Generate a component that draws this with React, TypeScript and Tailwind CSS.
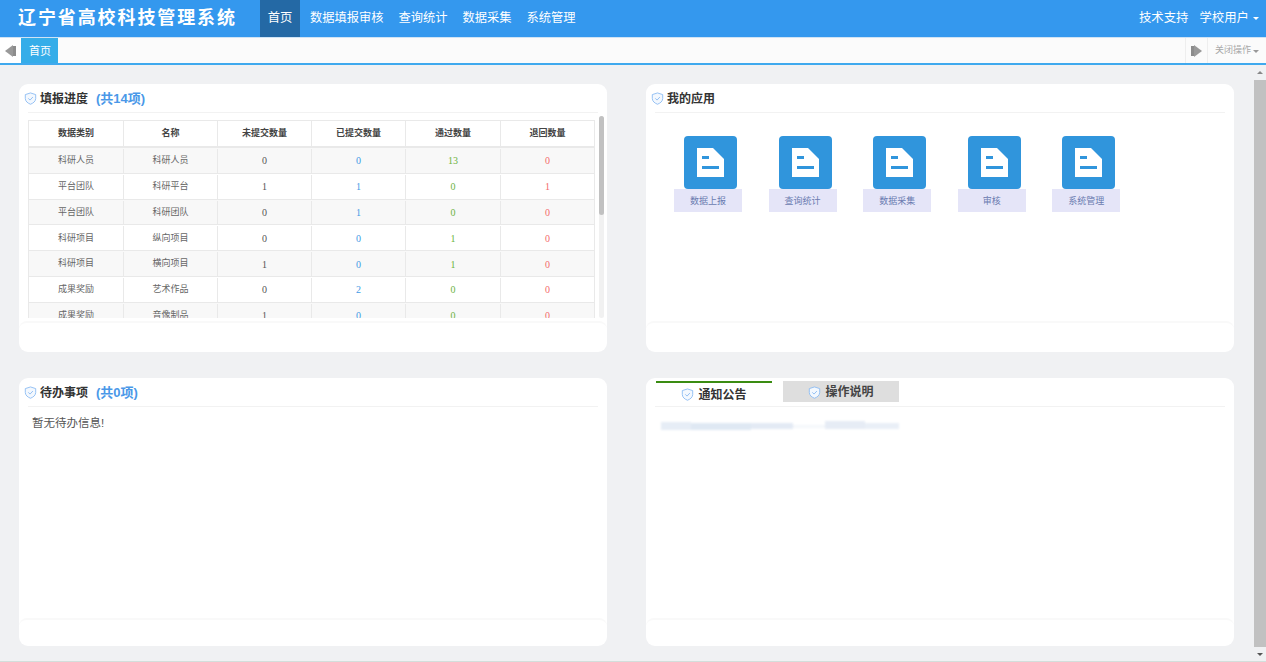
const sans = "font-['Liberation_Sans','Noto_Sans_CJK_SC',sans-serif]";

const Shield = ({ className = "" }: { className?: string }) => (
  <svg viewBox="0 0 14 14" width="13" height="13" fill="#f3f8fe" stroke="#8fbdf3" strokeWidth="1" className={className}>
    <path d="M7 1 L12.6 2.8 V7 C12.6 10 10 12 7 13.2 C4 12 1.4 10 1.4 7 V2.8 Z" />
    <path d="M4.6 6.8 L6.5 8.7 L9.6 5.4" fill="none" />
  </svg>
);

const rows = [
  ["科研人员", "科研人员", "0", "0", "13", "0"],
  ["平台团队", "科研平台", "1", "1", "0", "1"],
  ["平台团队", "科研团队", "0", "1", "0", "0"],
  ["科研项目", "纵向项目", "0", "0", "1", "0"],
  ["科研项目", "横向项目", "1", "0", "1", "0"],
  ["成果奖励", "艺术作品", "0", "2", "0", "0"],
  ["成果奖励", "音像制品", "1", "0", "0", "0"],
];
const heads = ["数据类别", "名称", "未提交数量", "已提交数量", "通过数量", "退回数量"];
const numColor = [
  "",
  "",
  "text-[#555] font-['Liberation_Serif',serif] text-[10px]",
  "text-[#3f9ae5] font-['Liberation_Serif',serif] text-[10px]",
  "text-[#6cb33f] font-['Liberation_Serif',serif] text-[10px]",
  "text-[#f46a6a] font-['Liberation_Serif',serif] text-[10px]",
];
const apps = ["数据上报", "查询统计", "数据采集", "审核", "系统管理"];

const Title = ({ text, extra }: { text: string; extra?: string }) => (
  <div className="h-[29px] flex items-center pl-[5px] relative">
    <Shield />
    <span className="ml-[3px] text-[12px] font-bold text-[#333]">{text}</span>
    {extra && <span className="ml-[8px] text-[13px] font-bold text-[#4a98e8]">{extra}</span>}
    <div className="absolute left-[9px] right-[9px] bottom-0 h-px bg-[#f2f2f2]" />
  </div>
);

const Card = ({ title, children, tall }: { title: React.ReactNode; children: React.ReactNode; tall?: boolean }) => (
  <div className="h-[268px] bg-white rounded-[9px] flex flex-col overflow-hidden">
    {title}
    <div className={`${tall ? "h-[211px]" : "h-[208px]"} relative overflow-hidden`}>{children}</div>
    <div className="flex-1 border-t-2 border-[#f9f9f9] rounded-t-[8px]" />
  </div>
);

const DocIcon = () => (
  <div className="ml-[10px] self-start w-[53px] h-[53px] bg-[#3095dc] rounded-[4px] flex items-center justify-center">
    <svg viewBox="0 0 27 29" width="27" height="29">
      <path d="M0 0 H16 L27 11 V29 H0 Z" fill="#fff" />
      <rect x="5" y="8" width="7" height="3" fill="#3095dc" />
      <rect x="5" y="18" width="17" height="3" fill="#3095dc" />
    </svg>
  </div>
);

const Smudge = ({ w, h, c, mt = 0 }: { w: number; h: number; c: string; mt?: number }) => (
  <div style={{ width: w, height: h, backgroundColor: c, marginTop: mt }} />
);

const cols = "grid grid-cols-[95px_94px_94px_94px_95px_1fr]";

export default function App() {
  return (
    <div className={`${sans} w-[1266px] h-[662px] overflow-hidden flex flex-col bg-[#f0f1f3] border-b border-[#d3dedb]`}>
      <header className="h-[37px] bg-[#3498ee] flex items-stretch text-white shrink-0">
        <div className="w-[260px] pl-[18px] flex items-center text-[18px] font-bold tracking-[1.9px] whitespace-nowrap">辽宁省高校科技管理系统</div>
        <div className="w-10 bg-[#2469a5] flex items-center justify-center text-[12.3px]">首页</div>
        <nav className="flex items-center text-[12.25px] gap-[15px] ml-[10px]">
          <span>数据填报审核</span>
          <span>查询统计</span>
          <span>数据采集</span>
          <span>系统管理</span>
        </nav>
        <div className="ml-auto flex items-center text-[12.4px] pr-[7px]">
          <span>技术支持</span>
          <span className="ml-[11px]">学校用户</span>
          <span className="ml-[4px] w-0 h-0 border-x-[3px] border-x-transparent border-t-[3px] border-t-white" />
        </div>
      </header>
      <div className="h-[28px] shrink-0 bg-[#fbfbfb] border-t border-t-[#cfe3f5] border-b-2 border-b-[#3fa9ee] flex items-stretch box-border">
        <div className="w-[21px] bg-white flex items-center justify-center">
          <span className="w-0 h-0 border-y-[6px] border-y-transparent border-r-[8px] border-r-[#999]" />
          <span className="w-[3px] h-[10px] bg-[#8c8c8c]" />
        </div>
        <div className="w-[37px] pl-px pt-px bg-[#35ade9] text-white text-[11px] flex items-center justify-center">首页</div>
        <div className="ml-auto w-[22px] border-l border-[#eeeeee] flex items-center justify-center">
          <span className="w-[3px] h-[10px] bg-[#8c8c8c]" />
          <span className="w-0 h-0 border-y-[6px] border-y-transparent border-l-[8px] border-l-[#999]" />
        </div>
        <div className="w-[59px] pt-px border-l border-[#eeeeee] flex items-center justify-center gap-[2px] text-[9px] text-[#a8a8a8]">
          关闭操作
          <span className="w-0 h-0 border-x-[3px] border-x-transparent border-t-[3px] border-t-[#999]" />
        </div>
      </div>
      <div className="flex-1 flex min-h-0">
        <main className="w-[1254px] pt-[19px] pl-[19px] pr-[20px] grid grid-cols-2 gap-x-[39px] gap-y-[26px] content-start">
          <Card title={<Title text="填报进度" extra="(共14项)" />}>
            <div className="absolute left-[9px] top-[7px] w-[567px] h-[198px] overflow-hidden border-x border-t border-[#e9e9e9]">
              <div className={`${cols} h-[27px] border-b-2 border-[#e9e9e9] text-[9px] font-bold text-[#444]`}>
                {heads.map((h) => (
                  <div key={h} className="flex items-center justify-center border-r border-[#e9e9e9] last:border-r-0">{h}</div>
                ))}
              </div>
              {rows.map((r, i) => (
                <div key={i} className={`${cols} h-[25.8px] pt-px border-b border-[#e9e9e9] text-[9px] text-[#666] ${i % 2 === 0 ? "bg-[#f8f8f8]" : "bg-white"}`}>
                  {r.map((c, j) => (
                    <div key={j} className={`flex items-center justify-center border-r border-[#e9e9e9] last:border-r-0 ${numColor[j]}`}>{c}</div>
                  ))}
                </div>
              ))}
            </div>
            <div className="absolute left-[580px] top-[3px] w-[5px] h-[202px] bg-[#f1f1f1] rounded-[3px]">
              <div className="w-[5px] h-[99px] bg-[#c1c1c1] rounded-[3px]" />
            </div>
          </Card>
          <Card title={<Title text="我的应用" />}>
            <div className="flex pl-[28px] pt-[23px] gap-[26.6px]">
              {apps.map((a) => (
                <div key={a} className="w-[68px] flex flex-col items-center">
                  <DocIcon />
                  <div className="w-[68px] h-[23px] pt-[2px] bg-[#e5e5f8] text-[#6a7bb0] text-[9px] flex items-center justify-center">{a}</div>
                </div>
              ))}
            </div>
          </Card>
          <Card tall title={<Title text="待办事项" extra="(共0项)" />}>
            <div className="pl-[13px] pt-[8px] text-[11.5px] leading-[16px] text-[#555]">暂无待办信息!</div>
          </Card>
          <Card
            tall
            title={
              <div className="h-[29px] relative flex items-start pl-[10px] pt-[3px]">
                <div className="w-[116px] h-[22px] pt-[3px] border-t-[2px] border-[#3a8c12] flex items-center justify-center gap-[4px] text-[12px] font-bold text-[#333]">
                  <Shield />通知公告
                </div>
                <div className="ml-[11px] w-[116px] h-[21px] pt-px bg-[#dedede] flex items-center justify-center gap-[4px] text-[12px] font-bold text-[#444]">
                  <Shield />操作说明
                </div>
                <div className="absolute left-[9px] right-[9px] bottom-0 h-px bg-[#f2f2f2]" />
              </div>
            }
          >
            <div className="ml-[15px] mt-[14px] w-[238px] h-[9px] blur-[1px] flex items-start">
              <Smudge w={30} h={8} c="#e6edf6" mt={1} />
              <Smudge w={60} h={7} c="#dfe8f3" mt={2} />
              <Smudge w={42} h={6} c="#e3eaf4" mt={2} />
              <Smudge w={32} h={3} c="#f4f7fb" mt={4} />
              <Smudge w={40} h={8} c="#e6ecf5" mt={0} />
              <Smudge w={34} h={6} c="#e9eff7" mt={2} />
            </div>
          </Card>
        </main>
        <aside className="w-[12px] flex flex-col bg-[#f0f1f3]">
          <div className="h-[15px] flex items-center justify-center">
            <span className="w-0 h-0 border-x-[3px] border-x-transparent border-b-[3px] border-b-[#888]" />
          </div>
          <div className="flex-1 bg-[#c1c1c1]" />
          <div className="h-[14px] flex items-center justify-center">
            <span className="w-0 h-0 border-x-[3px] border-x-transparent border-t-[3px] border-t-[#555]" />
          </div>
        </aside>
      </div>
    </div>
  );
}
